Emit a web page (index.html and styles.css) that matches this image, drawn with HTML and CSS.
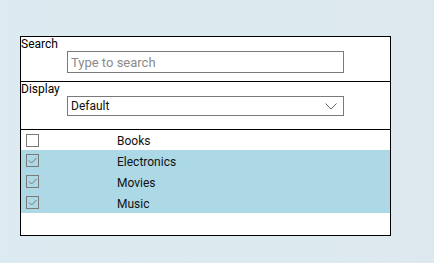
FILE: index.html
```html
<!DOCTYPE html>
<html lang="en">
<head>
    <meta charset="UTF-8">
    <meta name="viewport" content="width=device-width, initial-scale=1.0">
    <title>Category Filter</title>
    <link rel="stylesheet" href="styles.css">
</head>
<body>

<div class="panel">
    <div class="section search">
        <label for="search">Search</label>
        <input type="text" id="search" placeholder="Type to search">
    </div>

    <div class="section display">
        <label for="display">Display</label>
        <div class="select">
            <span>Default</span>
            <svg width="12" height="7" viewBox="0 0 12 7"><path d="M0.5 0.5 L6 6 L11.5 0.5" fill="none" stroke="#666" stroke-width="1"/></svg>
        </div>
    </div>

    <ul class="list">
        <li><span class="check"></span><span class="name">Books</span></li>
        <li class="selected"><span class="check"><svg width="11" height="11" viewBox="0 0 11 11"><path d="M2 5.5 L4.5 8 L9.5 3" fill="none" stroke="#777" stroke-width="1"/></svg></span><span class="name">Electronics</span></li>
        <li class="selected"><span class="check"><svg width="11" height="11" viewBox="0 0 11 11"><path d="M2 5.5 L4.5 8 L9.5 3" fill="none" stroke="#777" stroke-width="1"/></svg></span><span class="name">Movies</span></li>
        <li class="selected"><span class="check"><svg width="11" height="11" viewBox="0 0 11 11"><path d="M2 5.5 L4.5 8 L9.5 3" fill="none" stroke="#777" stroke-width="1"/></svg></span><span class="name">Music</span></li>
    </ul>
</div>

</body>
</html>
```

FILE: styles.css
```css
body {
    font-family: Roboto, "Liberation Sans", sans-serif;
    font-size: 12px;
    background: linear-gradient(to right, #dcebf1, #dde9ef);
    margin: 0;
    padding: 36px 0 0 20px;
    height: 263px;
    box-sizing: border-box;
    color: #111;
}
.panel {
    width: 371px;
    height: 200px;
    box-sizing: border-box;
    border: 1px solid #000;
    background-color: #fff;
    display: flex;
    flex-direction: column;
}
.section {
    border-bottom: 1px solid #000;
    display: flex;
    flex-direction: column;
}
.section label {
    line-height: 14px;
    height: 14px;
    color: #000;
}
.search {
    height: 45px;
    box-sizing: border-box;
}
.display {
    height: 48px;
    box-sizing: border-box;
}
input {
    margin-left: 46px;
    width: 277px;
    height: 22px;
    box-sizing: border-box;
    border: 1px solid #7a7a7a;
    padding: 0 3px;
    font-family: Roboto, "Liberation Sans", sans-serif;
    font-size: 13px;
    outline: none;
}
input::placeholder {
    color: #8a8a8a;
}
.select {
    margin-left: 46px;
    width: 277px;
    height: 20px;
    box-sizing: border-box;
    border: 1px solid #7a7a7a;
    padding: 0 6px 0 3px;
    display: flex;
    align-items: center;
    justify-content: space-between;
}
.list {
    list-style: none;
    margin: 0;
    padding: 0;
}
.list li {
    height: 21px;
    display: flex;
    align-items: center;
    padding-left: 5px;
}
.list li:first-child {
    height: 20px;
}
.list li.selected {
    background-color: #add8e6;
}
.check {
    width: 13px;
    height: 13px;
    box-sizing: border-box;
    border: 1px solid #7a7a7a;
    background-color: #fff;
    display: flex;
    align-items: center;
    justify-content: center;
}
.selected .check {
    background-color: transparent;
}
.name {
    margin-left: 78px;
    padding-top: 2px;
}
```
